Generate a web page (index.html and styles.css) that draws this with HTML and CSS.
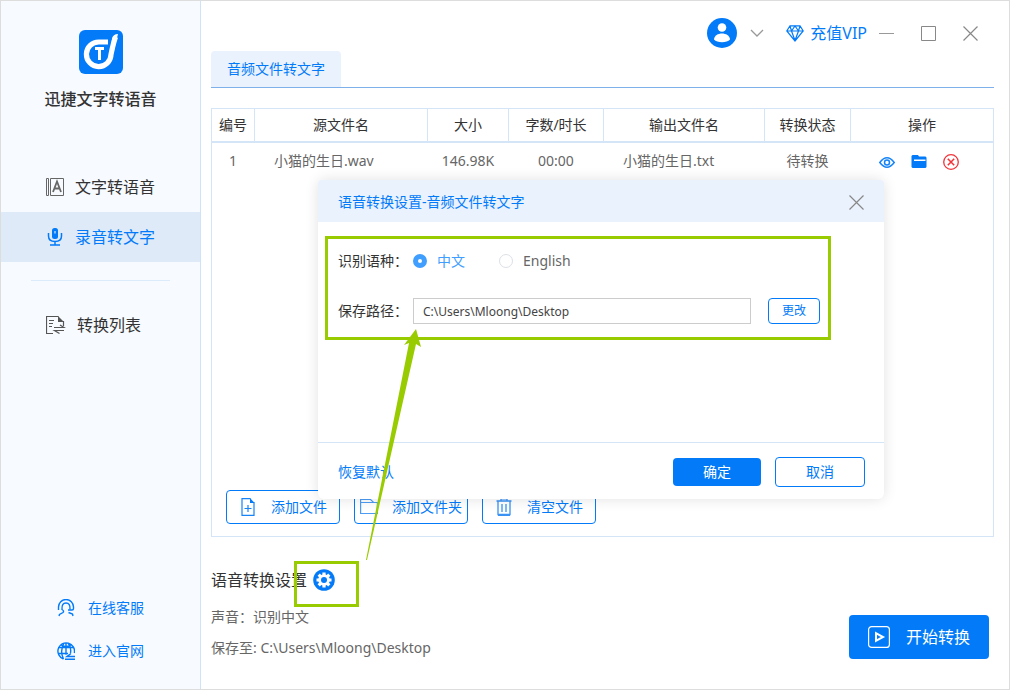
FILE: index.html
```html
<!DOCTYPE html>
<html lang="zh-CN">
<head>
<meta charset="utf-8">
<title>迅捷文字转语音</title>
<link rel="stylesheet" href="styles.css">
</head>
<body>
<div class="window">
  <aside class="sidebar">
    <svg class="logo" viewBox="0 0 44 44" width="44" height="44" aria-hidden="true">
      <rect width="44" height="44" rx="6" fill="#037bf9"/>
      <path d="M29 12H20A12.300 12.300 0 1 0 32 24.500Q34 14 36.500 7" fill="none" stroke="#fff" stroke-width="5.200"/>
      <path d="M39 4Q34 4 33 9L31 24H34Q36 18 37 12Z" fill="#fff"/>
      <path d="M16 18.500h9M20.500 18v12" stroke="#fff" stroke-width="3" fill="none"/>
    </svg>
    <h1 class="app-name">迅捷文字转语音</h1>
    <nav class="nav">
      <a class="nav-item" href="#tts">
        <svg viewBox="0 0 18 18" width="18" height="18" fill="none" stroke="#666" aria-hidden="true"><path d="M.5.5h2v17h-2zM4.500.5h13v17h-13z"/><path d="M7 14l4-10.500L15 14M8.500 10.500h5" stroke-width="1.800"/></svg>
        <span>文字转语音</span>
      </a>
      <a class="nav-item active" href="#stt" aria-current="page">
        <svg viewBox="0 0 18 18" width="18" height="18" aria-hidden="true"><rect x="6" y="0" width="6" height="11" rx="2.500" fill="#037bf9"/><path d="M8.500 3h1v2.500h-1z" fill="#fff"/><path d="M2.500 5v3q0 5.500 6.500 5.500T15.500 8V5M9 13.500V17M4 17h10" fill="none" stroke="#037bf9" stroke-width="1.500"/></svg>
        <span>录音转文字</span>
      </a>
      <hr class="nav-divider">
      <a class="nav-item" href="#list">
        <svg viewBox="0 0 20 18" width="20" height="18" fill="none" stroke="#555" aria-hidden="true"><path d="M12.500.5H.5v17H7M17.500 5v5M3 4.500h5M3 7.500h4M3 10.500h3" stroke-width="1.200"/><path d="M12 0l6 6h-6z" fill="#555" stroke="none"/><path d="M8 11.500h10l-4-2.500M18 14.500H8.500l5 3" stroke-width="1.200"/></svg>
        <span>转换列表</span>
      </a>
    </nav>
    <div class="links">
      <a class="side-link" href="#service">
        <svg viewBox="0 0 18 18" width="18" height="18" fill="none" stroke="#037bf9" stroke-width="1.400" aria-hidden="true"><path d="M1.500 11V8a7.300 7.300 0 0 1 15 0v1.500q0 1.500-1.500 1.500h-4"/><path d="M13 10.500Q13.500 4 9 4T5 10.500Q7.500 12 6 13.500L2.500 15.500 2 17M11.500 13.500l4 1.500.5 2"/></svg>
        <span>在线客服</span>
      </a>
      <a class="side-link" href="#website">
        <svg viewBox="0 0 18 18" width="18" height="18" fill="none" stroke="#037bf9" stroke-width="1.400" aria-hidden="true"><path d="M6.500 17A8.300 8.300 0 1 1 17.300 11M1 5.500h16M1 11.500h10M9 .7v12M6.500 17Q2.500 9 7 1M11 1q3.500 4 2.500 10M4 3q5 3 10 0"/><path d="M14 11.500l-4 3h8M8 17.200h10" stroke-width="1.500"/></svg>
        <span>进入官网</span>
      </a>
    </div>
  </aside>

  <main class="main">
    <header class="topbar">
      <button class="icon-button" aria-label="账户">
        <svg viewBox="0 0 30 30" width="30" height="30" aria-hidden="true"><circle cx="15" cy="15" r="15" fill="#037bf9"/><circle cx="15" cy="9.500" r="4.300" fill="#fff"/><path d="M7 21.500C7.500 13.500 22.500 13.500 23 21.500 20 25 10 25 7 21.500Z" fill="#fff"/></svg>
      </button>
      <button class="icon-button account-menu" aria-label="展开菜单">
        <svg viewBox="0 0 14 8" width="14" height="8" fill="none" stroke="#999" stroke-width="1.300" aria-hidden="true"><path d="M1 1l6 6 6-6"/></svg>
      </button>
      <a class="vip" href="#vip">
        <svg viewBox="0 0 18 17" width="18" height="17" fill="none" stroke="#037bf9" stroke-width="1.200" aria-hidden="true"><path d="M4 .8h10L17.200 6 9 16 .8 6ZM1 6h16M4 .8L5.500 6 9 15.500 12.500 6 14 .8M5.500 6L9 1l3.500 5"/></svg>
        <span>充值VIP</span>
      </a>
      <div class="window-controls">
        <button class="icon-button" aria-label="最小化"><svg viewBox="0 0 15 15" width="15" height="15" stroke="#999" aria-hidden="true"><path d="M0 7.500h15"/></svg></button>
        <button class="icon-button" aria-label="最大化"><svg viewBox="0 0 15 15" width="15" height="15" fill="none" stroke="#888" aria-hidden="true"><path d="M.5.5h14v14H.5z"/></svg></button>
        <button class="icon-button" aria-label="关闭"><svg viewBox="0 0 15 15" width="15" height="15" stroke="#888" stroke-width="1.200" aria-hidden="true"><path d="M.5.5l14 14M14.500.5l-14 14"/></svg></button>
      </div>
    </header>

    <div class="tabs"><button class="tab">音频文件转文字</button></div>

    <section class="files">
      <table class="file-table">
        <colgroup>
          <col class="col-no"><col class="col-source"><col class="col-size"><col class="col-length"><col class="col-output"><col class="col-status"><col>
        </colgroup>
        <thead>
          <tr><th>编号</th><th>源文件名</th><th>大小</th><th>字数/时长</th><th>输出文件名</th><th>转换状态</th><th>操作</th></tr>
        </thead>
        <tbody>
          <tr>
            <td>1</td><td class="name">小猫的生日.wav</td><td>146.98K</td><td>00:00</td><td class="name">小猫的生日.txt</td><td>待转换</td>
            <td>
              <div class="row-actions">
                <button class="icon-button" aria-label="预览"><svg viewBox="0 0 16 16" width="16" height="16" fill="none" stroke="#1683f7" stroke-width="1.500" aria-hidden="true"><path d="M.8 8.500Q8-1 15.200 8.500 8 18 .8 8.500Z"/><circle cx="8" cy="8.500" r="2.500"/></svg></button>
                <button class="icon-button" aria-label="打开文件夹"><svg viewBox="0 0 16 16" width="16" height="16" aria-hidden="true"><path d="M1.500 1H7L8 2.500H14.500L15.500 3.500V13L14.500 14H1.500L.5 13V2Z" fill="#037bf9"/><path d="M3 5.500h11.500v1.500H3z" fill="#fff"/></svg></button>
                <button class="icon-button" aria-label="删除"><svg viewBox="0 0 16 16" width="16" height="16" fill="none" stroke="#f0343a" stroke-width="1.300" aria-hidden="true"><circle cx="8" cy="8" r="7.300"/><path d="M4.800 4.800l6.400 6.400M11.200 4.800l-6.400 6.400" stroke-width="1.600"/></svg></button>
              </div>
            </td>
          </tr>
        </tbody>
      </table>
      <div class="file-actions">
        <button class="button action">
          <svg viewBox="0 0 18 18" width="18" height="18" fill="none" stroke="#1683f7" stroke-width="1.200" aria-hidden="true"><path d="M11.500.6H3v16.800h12V4M9 7v7M5.500 10.500h7"/><path d="M11 0l4.600 5H11z" fill="#037bf9" stroke="none"/></svg>
          <span>添加文件</span>
        </button>
        <button class="button action">
          <svg viewBox="0 0 18 18" width="18" height="18" fill="none" stroke="#4c9cf3" stroke-width="1.200" aria-hidden="true"><path d="M.6 15.500V1.500h10l3 3h3.800v11ZM.6 4.500h13"/></svg>
          <span>添加文件夹</span>
        </button>
        <button class="button action">
          <svg viewBox="0 0 18 18" width="18" height="18" fill="none" stroke="#3a92f5" stroke-width="1.300" aria-hidden="true"><path d="M1.500 3h15M6 3V.8h6V3M3 3v13.500h12V3M7 6v8M11 6v8"/><path d="M3 17h12" stroke-width="2"/></svg>
          <span>清空文件</span>
        </button>
      </div>
    </section>

    <footer class="summary">
      <div class="summary-text">
        <div class="summary-title">
          <h2>语音转换设置</h2>
          <button class="icon-button" aria-label="设置">
            <svg viewBox="0 0 22 22" width="22" height="22" aria-hidden="true"><circle cx="11" cy="11" r="10.800" fill="#037bf9"/><path d="M11 3.500v15M3.500 11h15M5.700 5.700l10.600 10.600M16.300 5.700L5.700 16.300" stroke="#fff" stroke-width="3.200"/><circle cx="11" cy="11" r="5.800" fill="#fff"/><circle cx="11" cy="11" r="3" fill="#037bf9"/></svg>
          </button>
        </div>
        <p>声音：识别中文</p>
        <p>保存至: C:\Users\Mloong\Desktop</p>
      </div>
      <button class="start">
        <svg viewBox="0 0 22 22" width="22" height="22" fill="none" stroke="#fff" aria-hidden="true"><rect x=".6" y=".6" width="20.800" height="20.800" rx="3" stroke-width="1.200"/><path d="M8 7.200v7.600L15 11Z" stroke-width="2"/></svg>
        <span>开始转换</span>
      </button>
    </footer>
  </main>

  <section class="dialog" role="dialog" aria-labelledby="dialog-title">
    <header class="dialog-header">
      <h2 id="dialog-title">语音转换设置-音频文件转文字</h2>
      <button class="icon-button" aria-label="关闭"><svg viewBox="0 0 15 15" width="15" height="15" stroke="#888" stroke-width="1.200" aria-hidden="true"><path d="M.5.5l14 14M14.500.5l-14 14"/></svg></button>
    </header>
    <div class="dialog-body">
      <div class="field" role="radiogroup" aria-labelledby="language-label">
        <span class="field-label" id="language-label">识别语种：</span>
        <label class="option"><input type="radio" name="language" checked><span>中文</span></label>
        <label class="option"><input type="radio" name="language"><span>English</span></label>
      </div>
      <div class="field">
        <label class="field-label" for="path">保存路径：</label>
        <input class="path" id="path" type="text" value="C:\Users\Mloong\Desktop">
        <button class="button change">更改</button>
      </div>
    </div>
    <footer class="dialog-footer">
      <a class="reset" href="#reset">恢复默认</a>
      <button class="confirm">确定</button>
      <button class="button cancel">取消</button>
    </footer>
  </section>

  <div class="mark mark-fields"></div>
  <div class="mark mark-gear"></div>
  <svg class="arrow" viewBox="0 0 60 234" width="60" height="234" aria-hidden="true"><path d="M52 2l5 18-5-3L3 233H2L45 16l-5 2Z" fill="#9c0"/></svg>
</div>
</body>
</html>
```
FILE: styles.css
```css
* {
  box-sizing: border-box;
}

body {
  margin: 0;
  background: #fff;
  color: #333;
  font: 14px/22px "Noto Sans", "Noto Sans CJK SC", sans-serif;
}

h1, h2, p {
  margin: 0;
  font-weight: 400;
}

a {
  color: #037bf9;
  text-decoration: none;
}

button, input {
  font: inherit;
  margin: 0;
}

button {
  padding: 0;
  border: 0;
  background: none;
  cursor: pointer;
}

svg {
  display: block;
  flex: none;
}

.window {
  position: relative;
  display: grid;
  grid-template-columns: 200px 1fr;
  min-height: 100vh;
  border: 1px solid #ddd;
}

.sidebar {
  display: flex;
  flex-direction: column;
  padding: 29px 0 27px;
  background: #f7faff;
  border-right: 1px solid #cfe2f7;
}

.logo {
  align-self: center;
}

.app-name {
  margin-top: 13px;
  font-size: 16px;
  line-height: 24px;
  font-weight: 500;
  text-align: center;
}

.nav {
  margin-top: 51px;
}

.nav-item {
  display: flex;
  align-items: center;
  gap: 11px;
  height: 50px;
  padding-left: 45px;
  color: #333;
  font-size: 16px;
}

.nav-item.active {
  background: #dfeaf8;
  color: #037bf9;
}

.nav-divider {
  height: 1px;
  margin: 18px 30px 19px;
  border: 0;
  background: #dcebfb;
}

.links {
  display: grid;
  gap: 21px;
  margin-top: auto;
  padding-left: 56px;
}

.side-link {
  display: flex;
  align-items: center;
  gap: 13px;
}

.main {
  display: flex;
  flex-direction: column;
  min-width: 0;
  padding: 0 15px 30px 10px;
}

.topbar {
  display: flex;
  align-items: center;
  justify-content: flex-end;
  height: 50px;
  padding: 14px 16px 0 0;
}

.account-menu {
  margin-left: 13px;
}

.vip {
  display: flex;
  align-items: center;
  gap: 6px;
  margin-left: 22px;
  font-size: 16px;
}

.window-controls {
  display: flex;
  gap: 27px;
  margin-left: 12px;
}

.tabs {
  border-bottom: 1px solid #7eb0ea;
}

.tab {
  display: block;
  height: 36px;
  padding: 0 16px;
  border-radius: 4px 4px 0 0;
  background: #eaf2fe;
  color: #037bf9;
}

.files {
  display: flex;
  flex: 1;
  flex-direction: column;
  margin-top: 20px;
  border: 1px solid #d5e5f8;
}

.file-table {
  width: 100%;
  table-layout: fixed;
  border-collapse: separate;
  border-spacing: 0;
}

.col-no { width: 43px; }
.col-source { width: 173px; }
.col-size { width: 81px; }
.col-length { width: 95px; }
.col-output { width: 161px; }
.col-status { width: 86px; }

.file-table th {
  height: 34px;
  padding: 0;
  border-right: 1px solid #d5e5f8;
  border-bottom: 2px solid #d5e5f8;
  font-weight: 400;
}

.file-table th:last-child {
  border-right: 0;
}

.file-table td {
  height: 36px;
  padding: 0 1px 0 0;
  color: #666;
  text-align: center;
}

.file-table .name {
  padding-left: 19px;
  text-align: left;
}

.row-actions {
  display: flex;
  justify-content: center;
  gap: 16px;
  padding: 2px 5px 0 0;
}

.file-actions {
  display: flex;
  gap: 14px;
  margin-top: auto;
  padding: 14px 14px 12px;
}

.button {
  border: 1px solid #037bf9;
  border-radius: 4px;
  background: #fff;
  color: #037bf9;
}

.action {
  display: flex;
  align-items: center;
  justify-content: center;
  gap: 14px;
  width: 114px;
  height: 34px;
}

.summary {
  display: flex;
  align-items: flex-end;
  justify-content: space-between;
  padding: 29px 5px 0 0;
  color: #666;
}

.summary-text {
  display: grid;
  gap: 9px;
}

.summary-title {
  display: flex;
  align-items: center;
  gap: 6px;
  height: 28px;
  margin-bottom: 3px;
  color: #333;
}

.summary-title h2 {
  font-size: 16px;
}

.start {
  display: flex;
  align-items: center;
  justify-content: center;
  gap: 16px;
  width: 140px;
  height: 44px;
  border-radius: 4px;
  background: #037bf9;
  color: #fff;
  font-size: 16px;
}

.dialog {
  position: absolute;
  top: 179px;
  left: 317px;
  right: 125px;
  display: flex;
  flex-direction: column;
  min-height: 319px;
  border-radius: 6px;
  background: #fff;
  box-shadow: 0 0 14px rgba(0, 0, 0, 0.12);
}

.dialog-header {
  display: flex;
  align-items: center;
  justify-content: space-between;
  height: 42px;
  padding: 2px 20px 0;
  border-radius: 4px 4px 0 0;
  background: #eaf2fe;
}

.dialog-header h2 {
  color: #037bf9;
  font-size: 14px;
}

.dialog-body {
  display: flex;
  flex: 1;
  flex-direction: column;
  gap: 24px;
  padding: 26px 64px 0 20px;
}

.field {
  display: flex;
  align-items: center;
  height: 26px;
}

.field-label {
  width: 75px;
}

.option {
  display: flex;
  align-items: center;
  gap: 10px;
  margin-right: 34px;
  color: #666;
}

.option input {
  appearance: none;
  width: 14px;
  height: 14px;
  border: 1px solid #dcdfe6;
  border-radius: 50%;
  background: #fff;
}

.option input:checked {
  border: 5px solid #409eff;
}

.option input:checked + span {
  color: #409eff;
}

.path {
  flex: 1;
  min-width: 0;
  height: 26px;
  padding: 0 9px;
  border: 1px solid #ccc;
  background: #fff;
  color: #444;
  font-size: 12px;
}

.change {
  width: 52px;
  height: 26px;
  margin-left: 17px;
  font-size: 12px;
}

.dialog-footer {
  display: flex;
  align-items: center;
  gap: 14px;
  height: 57px;
  padding: 2px 19px 0 20px;
  border-top: 1px solid #d5e5f8;
}

.reset {
  margin-right: auto;
}

.confirm {
  width: 88px;
  height: 28px;
  border-radius: 4px;
  background: #037bf9;
  color: #fff;
}

.cancel {
  width: 90px;
  height: 30px;
}

.mark {
  position: absolute;
  border: 3px solid #9c0;
  pointer-events: none;
}

.mark-fields {
  top: 235px;
  left: 324px;
  right: 178px;
  height: 104px;
}

.mark-gear {
  bottom: 82px;
  left: 293px;
  width: 65px;
  height: 46px;
}

.arrow {
  position: absolute;
  top: 326px;
  left: 363px;
  pointer-events: none;
}
```
